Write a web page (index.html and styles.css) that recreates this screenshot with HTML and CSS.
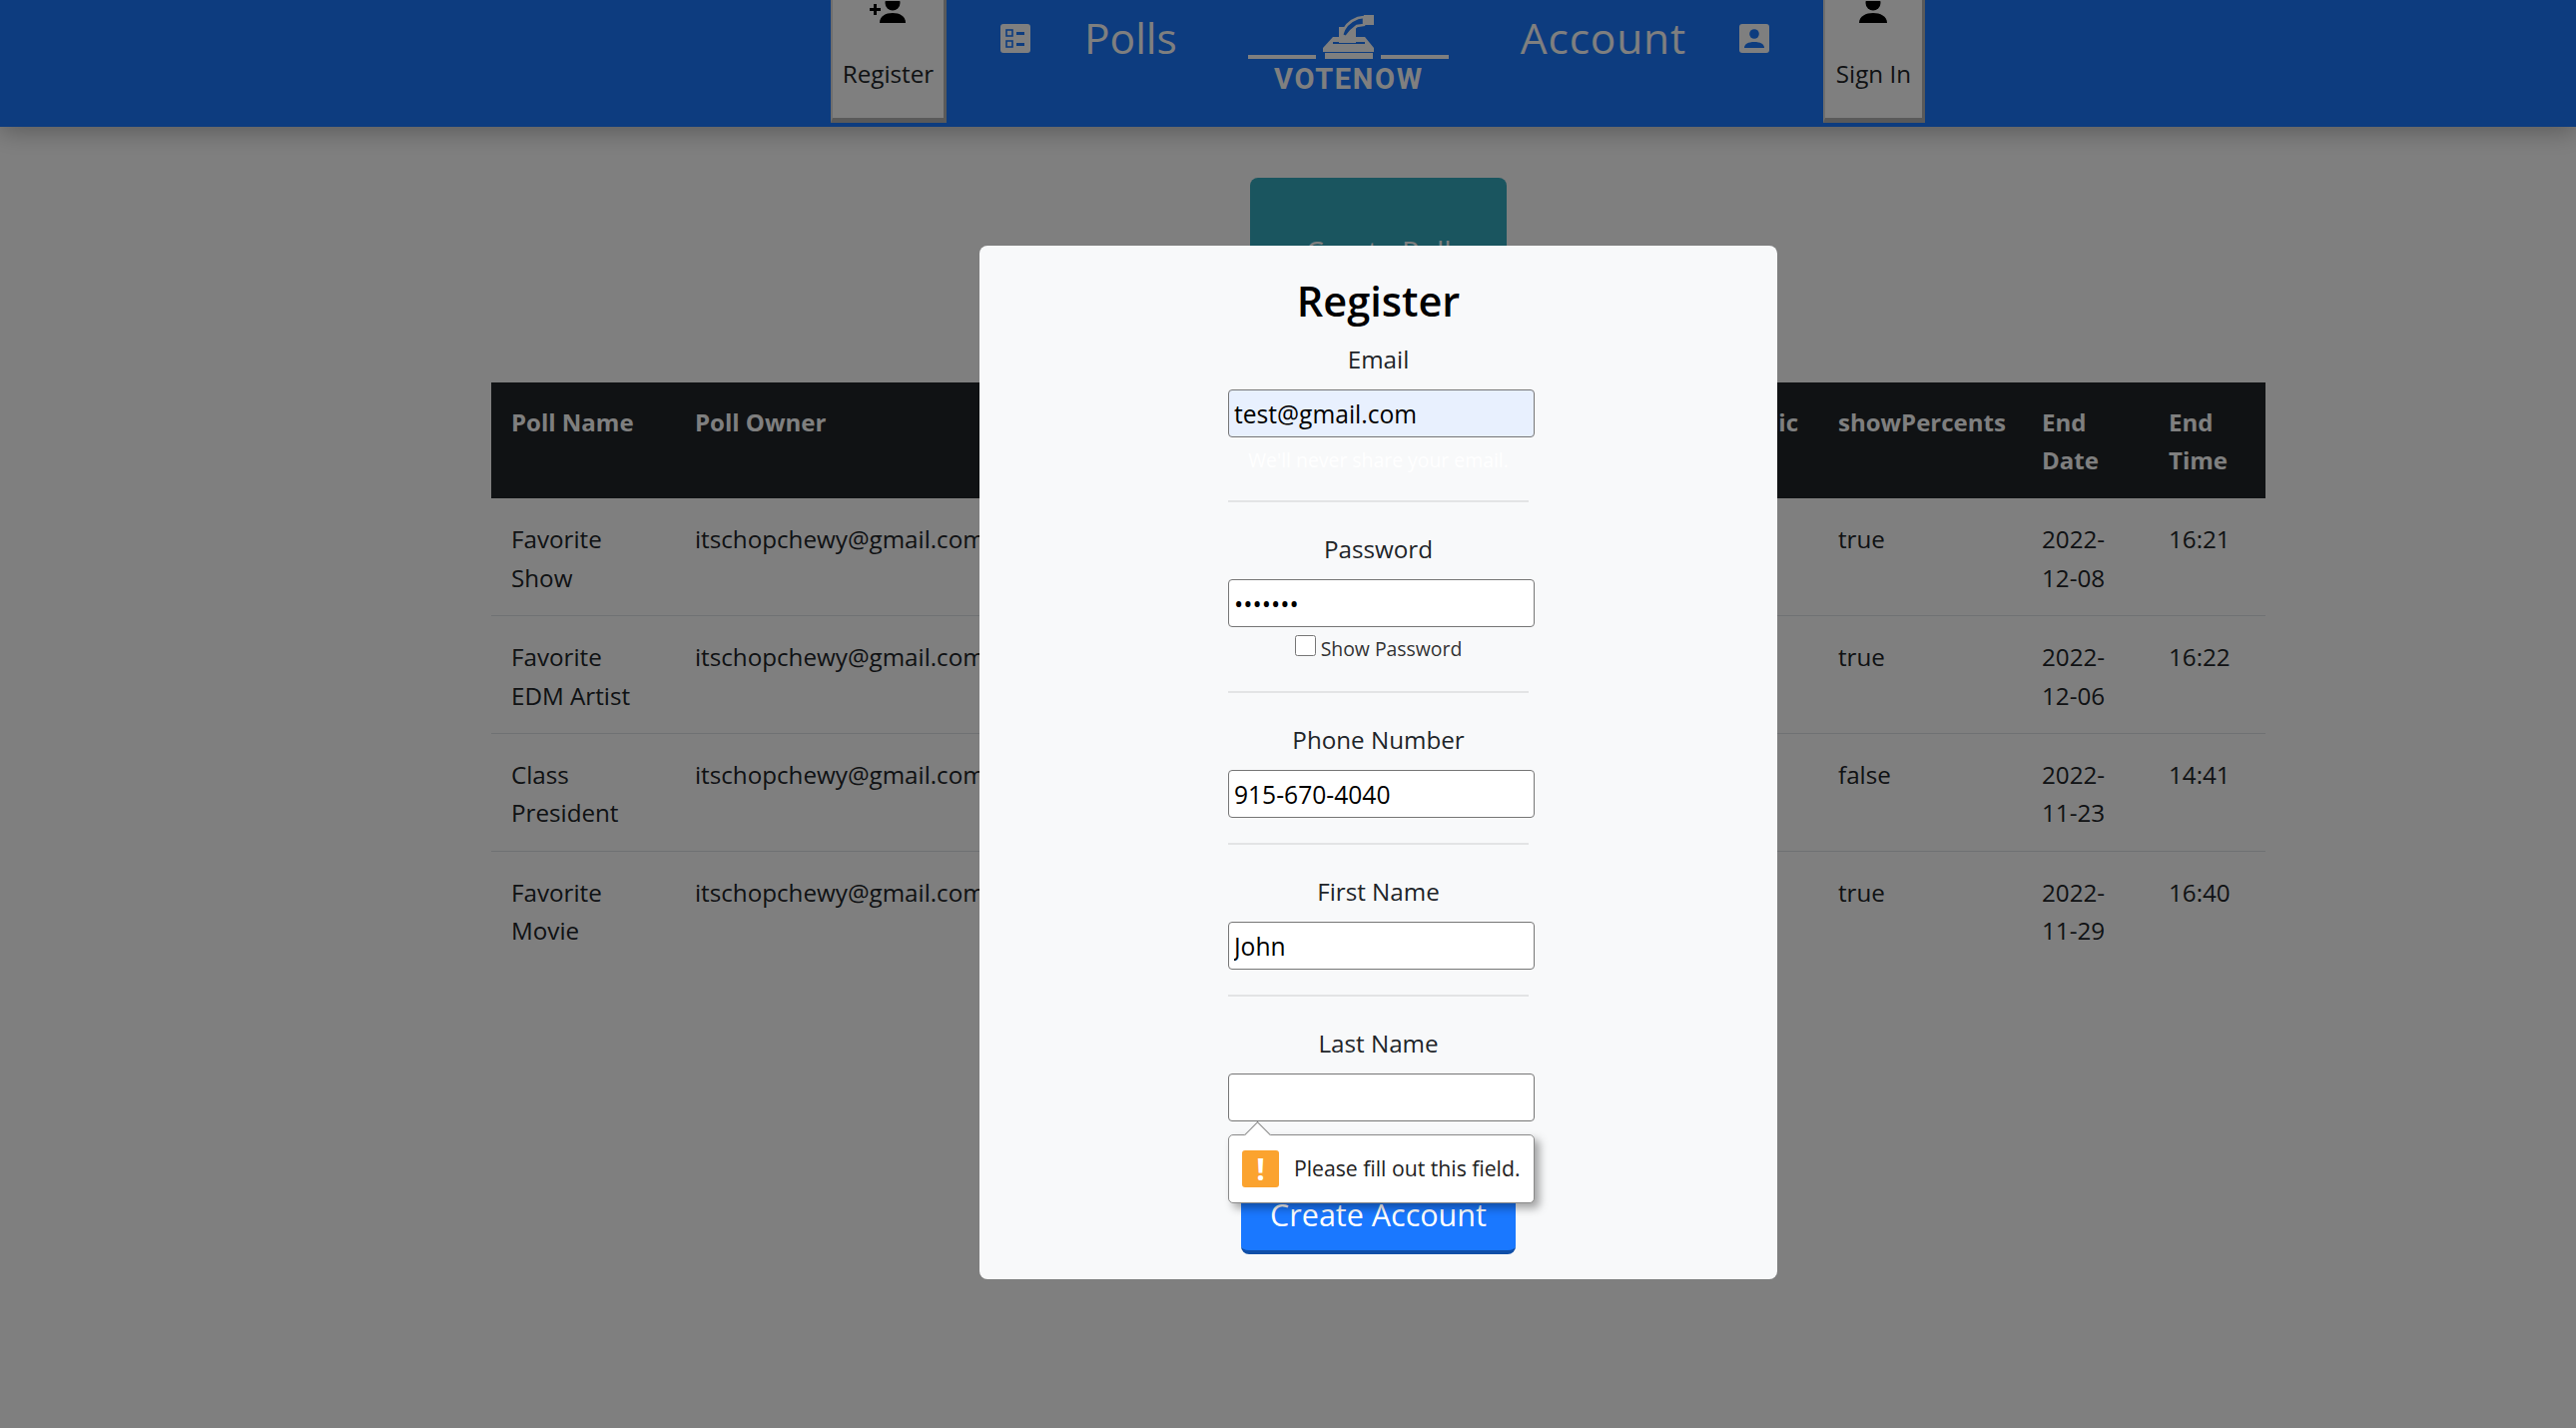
FILE: index.html
```html
<!DOCTYPE html>
<html lang="en">

<head>
  <meta charset="UTF-8">
  <title>VoteNow</title>
  <link rel="stylesheet" href="styles.css">
</head>

<body>
  <header class="topbar">
    <a class="auth-btn register-btn" href="#">
      <svg class="auth-icon" viewBox="0 0 40 22" width="40" height="22">
        <path d="M1 7h4V3h3v4h4v3H8v4H5v-4H1z" />
        <circle cx="24" cy="2" r="7.5" />
        <path d="M11 22c0-7 6-10 13-10s13 3 13 10z" />
      </svg>
      <span>Register</span>
    </a>
    <a class="nav-link polls-link" href="#">
      <svg class="nav-icon" viewBox="0 0 30 29" width="30" height="29">
        <rect width="30" height="29" rx="3" class="icon-bg" />
        <rect x="6" y="6" width="6" height="6" class="icon-box" />
        <rect x="6" y="17" width="6" height="6" class="icon-box" />
        <rect x="16" y="8" width="8" height="3" class="icon-cut" />
        <rect x="16" y="19" width="8" height="3" class="icon-cut" />
      </svg>
      <span class="nav-text">Polls</span>
    </a>
    <a class="logo" href="#">
      <svg class="logo-mark" viewBox="0 0 202 46" width="202" height="46">
        <rect x="0" y="40" width="68" height="4" />
        <rect x="133" y="40" width="68" height="4" />
        <rect x="77" y="38" width="48" height="6" />
        <path d="M85 22h32l9 11v4H75v-4z" />
        <rect x="85" y="27" width="32" height="2" class="logo-cut" />
        <rect x="91" y="12" width="17" height="16" />
        <path d="M94 20c2-8 8-14 16-17l6-1v8l-7 1-6 5-5 6z" class="logo-hand" />
        <rect x="116" y="0" width="10" height="10" />
      </svg>
      <span class="logo-text">VOTENOW</span>
    </a>
    <a class="nav-link account-link" href="#">
      <span class="nav-text account-text">Account</span>
      <svg class="nav-icon" viewBox="0 0 30 29" width="30" height="29">
        <rect width="30" height="29" rx="3" class="icon-bg" />
        <circle cx="15" cy="10" r="4.8" class="icon-cut" />
        <path d="M5 24c0-4 4-6 10-6s10 2 10 6z" class="icon-cut" />
      </svg>
    </a>
    <a class="auth-btn signin-btn" href="#">
      <svg class="auth-icon" viewBox="0 0 28 22" width="28" height="22">
        <circle cx="14" cy="2" r="7.5" />
        <path d="M0 22c0-7 7-10 14-10s14 3 14 10z" />
      </svg>
      <span>Sign In</span>
    </a>
  </header>

  <main class="content">
    <button class="create-poll" type="button">Create Poll</button>
    <table class="polls-table">
      <colgroup>
        <col class="col-name">
        <col class="col-owner">
        <col class="col-public">
        <col class="col-percents">
        <col class="col-date">
        <col class="col-time">
      </colgroup>
      <thead>
        <tr>
          <th>Poll Name</th>
          <th>Poll Owner</th>
          <th>Public</th>
          <th>showPercents</th>
          <th>End Date</th>
          <th>End Time</th>
        </tr>
      </thead>
      <tbody>
        <tr>
          <td>Favorite Show</td>
          <td>itschopchewy@gmail.com</td>
          <td>true</td>
          <td>true</td>
          <td>2022-12-08</td>
          <td>16:21</td>
        </tr>
        <tr>
          <td>Favorite EDM Artist</td>
          <td>itschopchewy@gmail.com</td>
          <td>true</td>
          <td>true</td>
          <td>2022-12-06</td>
          <td>16:22</td>
        </tr>
        <tr>
          <td>Class President</td>
          <td>itschopchewy@gmail.com</td>
          <td>true</td>
          <td>false</td>
          <td>2022-11-23</td>
          <td>14:41</td>
        </tr>
        <tr>
          <td>Favorite Movie</td>
          <td>itschopchewy@gmail.com</td>
          <td>true</td>
          <td>true</td>
          <td>2022-11-29</td>
          <td>16:40</td>
        </tr>
      </tbody>
    </table>
  </main>

  <div class="backdrop">
    <form class="modal" action="#">
      <h2 class="modal-title">Register</h2>

      <label class="field-label" for="email">Email</label>
      <input class="field-input autofilled" type="text" id="email" value="test@gmail.com">
      <p class="field-help">We'll never share your email.</p>
      <hr class="field-rule">

      <label class="field-label" for="password">Password</label>
      <input class="field-input" type="password" id="password" value="1234567">
      <div class="show-password">
        <input class="show-check" type="checkbox" id="show">
        <label for="show">Show Password</label>
      </div>
      <hr class="field-rule">

      <label class="field-label" for="phone">Phone Number</label>
      <input class="field-input" type="text" id="phone" value="915-670-4040">
      <hr class="field-rule">

      <label class="field-label" for="first">First Name</label>
      <input class="field-input" type="text" id="first" value="John">
      <hr class="field-rule">

      <label class="field-label" for="last">Last Name</label>
      <div class="last-field">
        <input class="field-input" type="text" id="last">
        <div class="bubble">
          <span class="bubble-arrow"></span>
          <span class="bubble-icon">!</span>
          <span class="bubble-text">Please fill out this field.</span>
        </div>
      </div>

      <button class="create-account" type="submit">Create Account</button>
    </form>
  </div>
</body>

</html>
```

FILE: styles.css
```css
/* page colours sit under a 50% black backdrop, same as the modal library does */
body {
  margin: 0;
  height: 100vh;
  overflow: hidden;
  background-color: #fff;
  color: #212529;
  font-family: "Open Sans", sans-serif;
  font-size: 24.2px;
  line-height: 38.4px;
}

a {
  text-decoration: none;
}

/* top bar */
.topbar {
  display: flex;
  align-items: flex-start;
  height: 127px;
  padding-left: 832px;
  background-color: #1a78ff;
  box-shadow: 0 4px 24px rgba(0, 0, 0, .3);
  overflow: hidden;
}

.auth-btn {
  display: flex;
  flex-direction: column;
  align-items: center;
  justify-content: flex-end;
  box-sizing: border-box;
  height: 123px;
  padding-bottom: 25px;
  border-right: 3px solid #b5b5b5;
  border-bottom: 5px solid #b5b5b5;
  border-left: 2px solid #ddd;
  background-color: #fff;
  color: #212529;
}

.register-btn {
  width: 116px;
}

.signin-btn {
  width: 102px;
  margin-left: 54px;
}

.auth-icon {
  margin-bottom: 32px;
  fill: #000;
}

.nav-link {
  display: flex;
  align-items: flex-start;
  color: #fff;
}

.nav-text {
  font-size: 42.5px;
  line-height: 60px;
  margin-top: 8px;
}

.account-text {
  letter-spacing: .8px;
}

.nav-icon {
  margin-top: 24px;
}

.icon-bg {
  fill: #fff;
}

.icon-box {
  fill: none;
  stroke: #1a78ff;
  stroke-width: 1.6;
}

.icon-cut {
  fill: #1a78ff;
}

.polls-link {
  gap: 54px;
  margin-left: 54px;
}

.account-link {
  gap: 53px;
  margin-left: 71px;
}

.logo {
  display: flex;
  flex-direction: column;
  align-items: center;
  margin-left: 71px;
  padding-top: 15px;
  color: #fff;
}

.logo-mark {
  fill: #fff;
}

.logo-cut {
  fill: #1a78ff;
}

.logo-hand {
  fill: #1a78ff;
  stroke: #fff;
  stroke-width: 2.5;
}

.logo-text {
  font-family: "Roboto", sans-serif;
  font-size: 29px;
  font-weight: 700;
  line-height: 30px;
  letter-spacing: 1.7px;
  margin-top: 3px;
}

/* page content */
.content {
  display: flex;
  flex-direction: column;
  align-items: center;
  width: 1777px;
  margin-left: 492px;
  padding-top: 51px;
}

.create-poll {
  width: 257px;
  height: 146px;
  margin-bottom: 59px;
  border: 0;
  border-radius: 8px;
  background-color: #34aabe;
  color: #fff;
  font-family: inherit;
  font-size: 29px;
}

.polls-table {
  table-layout: fixed;
  width: 100%;
  border-collapse: collapse;
}

.col-name {
  width: 184px;
}

.col-owner {
  width: 1032px;
}

.col-public {
  width: 113px;
}

.col-percents {
  width: 204px;
}

.col-date {
  width: 127px;
}

.col-time {
  width: 117px;
}

.polls-table th,
.polls-table td {
  text-align: left;
  vertical-align: top;
  overflow: hidden;
}

.polls-table th {
  padding: 21px 18px 18.6px 20px;
  background-color: #212529;
  color: #fff;
  font-size: 24px;
  font-weight: 700;
}

.polls-table td {
  padding: 22px 18px 18px 20px;
  border-bottom: 1.6px solid #dee2e6;
}

.polls-table tbody tr:last-child td {
  border-bottom: 0;
}

/* modal */
.backdrop {
  position: fixed;
  top: 0;
  left: 0;
  display: flex;
  justify-content: center;
  align-items: flex-start;
  box-sizing: border-box;
  width: 100%;
  height: 100%;
  padding: 246px 0 0 181px;
  background-color: rgba(0, 0, 0, .5);
}

.modal {
  display: flex;
  flex-direction: column;
  align-items: center;
  box-sizing: border-box;
  width: 799px;
  height: 1035px;
  padding-top: 28px;
  border-radius: 8px;
  background-color: #f8f9fa;
}

.modal-title {
  margin: 0 0 13px;
  color: #000;
  font-size: 41.5px;
  font-weight: 600;
  line-height: 54px;
}

.field-label {
  margin-bottom: 11px;
}

.field-input {
  box-sizing: border-box;
  display: block;
  width: 307px;
  height: 48px;
  margin-left: 6px;
  padding: 0 5px;
  border: 1.6px solid #767676;
  border-radius: 4px;
  background-color: #fff;
  color: #000;
  font-family: inherit;
  font-size: 24.6px;
}

.autofilled {
  background-color: #e8f0fe;
}

.field-help {
  margin: 7px 0 0;
  color: #fff;
  font-size: 19.4px;
  line-height: 31px;
}

.field-rule {
  box-sizing: border-box;
  width: 301px;
  height: 2px;
  margin: 25px 0 27.5px;
  border: 0;
  background-color: #e3e4e5;
}

.show-password {
  display: flex;
  align-items: center;
  gap: 5px;
  margin-top: 6px;
  margin-bottom: 2px;
  font-size: 19.4px;
  line-height: 31px;
  color: #333;
}

.show-check {
  width: 21px;
  height: 21px;
  margin: 0;
  transform: translateY(-3px);
}

.last-field {
  position: relative;
}

.bubble {
  position: absolute;
  z-index: 2;
  top: 61px;
  left: 6px;
  display: flex;
  align-items: center;
  gap: 15px;
  box-sizing: border-box;
  width: 307px;
  height: 69px;
  padding-left: 13px;
  border: 1px solid #8a8a8a;
  border-radius: 5px;
  background-color: #fff;
  box-shadow: 5px 5px 8px rgba(0, 0, 0, .35);
  white-space: nowrap;
}

.bubble-arrow {
  position: absolute;
  top: -10px;
  left: 19px;
  width: 18px;
  height: 18px;
  border-top: 1px solid #8a8a8a;
  border-left: 1px solid #8a8a8a;
  background-color: #fff;
  transform: rotate(45deg);
}

.bubble-icon {
  width: 37px;
  height: 37px;
  border-radius: 3px;
  background-color: #fba32f;
  color: #fff;
  font-size: 30px;
  font-weight: 700;
  line-height: 37px;
  text-align: center;
}

.bubble-text {
  font-size: 21.2px;
  color: #222;
}

.create-account {
  box-sizing: border-box;
  width: 275px;
  height: 76px;
  margin-top: 57px;
  border: 0;
  border-bottom: 4px solid #0f4fa8;
  border-radius: 8px;
  background-color: #1a78ff;
  color: #fff;
  font-family: inherit;
  font-size: 30.5px;
}
```
